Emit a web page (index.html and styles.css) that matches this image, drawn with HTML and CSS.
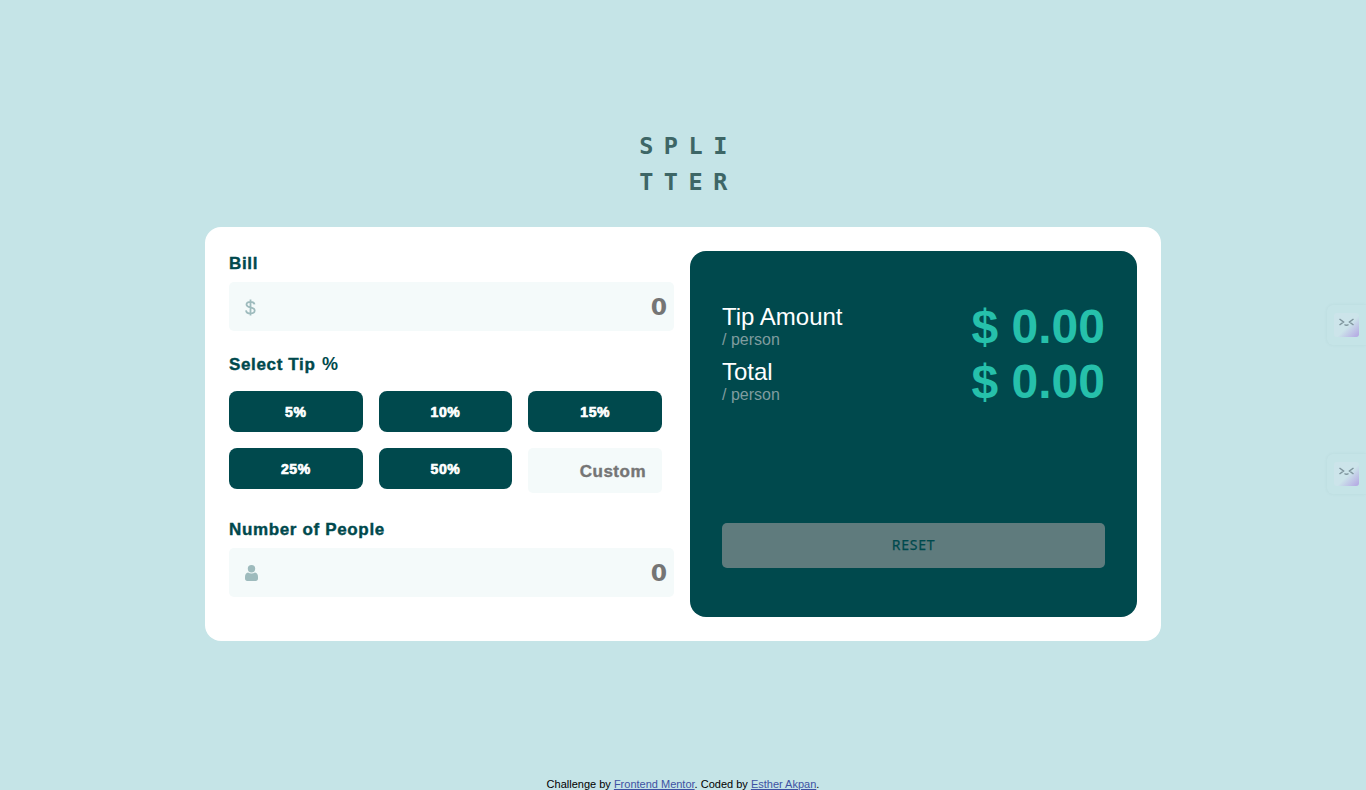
FILE: index.html
```html
<!DOCTYPE html>
<html lang="en">
<head>
<meta charset="utf-8">
<title>Tip calculator</title>
<link rel="stylesheet" href="styles.css">
</head>
<body>
<h1 class="logo"><span>SPLI</span><span>TTER</span></h1>
<main class="card">
  <form class="form">
    <label class="label bill" for="bill">Bill</label>
    <div class="field">
      <svg width="11" height="17" viewBox="0 0 11 17"><path fill="none" stroke="#9ebbbd" stroke-width="1.8" d="M9.5 5.3C9.2 3.6 7.8 2.8 5.5 2.8 3 2.8 1.5 3.8 1.5 5.5c0 4.2 8.2 1.6 8.2 6 0 1.900-1.700 2.900-4.200 2.900C2.700 14.400 1.200 13.200 1 11.300M5.500 .5v16"/></svg>
      <input class="entry" id="bill" placeholder="0">
    </div>
    <p class="label tip">Select Tip <span class="light">%</span></p>
    <div class="tips">
      <button type="button" class="pct">5%</button>
      <button type="button" class="pct">10%</button>
      <button type="button" class="pct">15%</button>
      <button type="button" class="pct">25%</button>
      <button type="button" class="pct">50%</button>
      <input class="custom" placeholder="Custom" aria-label="Custom tip">
    </div>
    <label class="label people" for="people">Number of People</label>
    <div class="field">
      <svg width="13" height="16" viewBox="0 0 13 16"><g fill="#9ebbbd"><circle cx="6.500" cy="3.700" r="3.700"/><path d="M3 7.500c2 1.400 5 1.400 7 0 2 .3 3 2 3 4.500v1.500c0 1.600-.8 2.500-2.300 2.500H2.300C.8 16 0 15.100 0 13.500V12c0-2.500 1-4.200 3-4.500z"/></g></svg>
      <input class="entry" id="people" placeholder="0">
    </div>
  </form>
  <section class="panel">
    <div class="result">
      <div><p class="name">Tip Amount</p><p class="per">/ person</p></div>
      <p class="amount">$ 0.00</p>
    </div>
    <div class="result">
      <div><p class="name">Total</p><p class="per">/ person</p></div>
      <p class="amount">$ 0.00</p>
    </div>
    <button type="button" class="reset">RESET</button>
  </section>
</main>
<footer class="credit">Challenge by <a href="#">Frontend Mentor</a>. Coded by <a href="#">Esther Akpan</a>.</footer>
<div class="widget upper"><svg class="face" viewBox="0 0 24 24"><path d="M5 6l4 3-4 3M19 6l-4 3 4 3M10 11.500q2 1.500 4 0"/></svg></div>
<div class="widget lower"><svg class="face" viewBox="0 0 24 24"><path d="M5 6l4 3-4 3M19 6l-4 3 4 3M10 11.500q2 1.500 4 0"/></svg></div>
</body>
</html>
```
FILE: styles.css
```css
* { box-sizing: border-box; }
body {
  margin: 0;
  height: 790px;
  overflow: hidden;
  display: flex;
  flex-direction: column;
  align-items: center;
  background: #c5e4e7;
  font-family: "Liberation Sans", Arial, sans-serif;
}
p { margin: 0; }
.logo {
  display: flex;
  flex-direction: column;
  flex-shrink: 0;
  margin: 128px 0 27px;
  padding-left: 11px;
  color: #3d6666;
  font: bold 23.5px/36px "DejaVu Sans Mono", monospace;
  letter-spacing: 10.5px;
}
.card {
  display: grid;
  grid-template-columns: 445px 447px;
  gap: 16px;
  flex-shrink: 0;
  width: 956px;
  height: 414px;
  padding: 24px;
  background: #fff;
  border-radius: 16px;
}
.label {
  display: block;
  height: 24px;
  color: #00494d;
  font-size: 17px;
  font-weight: bold;
  line-height: 25px;
  letter-spacing: .65px;
  -webkit-text-stroke: .4px #00494d;
}
.light { margin-left: 1px; font-size: 18px; -webkit-text-stroke: 0; }
.bill { margin-bottom: 7px; }
.tip { margin: 21px 0 15px; }
.people { margin: 24px 0 7px; }
.field {
  display: flex;
  align-items: center;
  height: 49px;
  padding: 1px 7px 0 16px;
  background: #f4fafa;
  border-radius: 5px;
}
.entry {
  flex: 1;
  min-width: 0;
  padding: 0;
  border: 0;
  background: none;
  text-align: right;
  font: bold 23.5px "DejaVu Sans", sans-serif;
}
input::placeholder { color: #757575; opacity: 1; }
.tips {
  display: grid;
  grid-template-columns: repeat(3, 1fr);
  gap: 16px;
  width: 433px;
  align-items: start;
}
.pct {
  height: 41px;
  padding: 0;
  border: 0;
  border-radius: 8px;
  background: #00494d;
  color: #fff;
  font: bold 14px "Liberation Sans", sans-serif;
  letter-spacing: .6px;
  -webkit-text-stroke: .7px #fff;
}
.custom {
  width: 100%;
  height: 45px;
  padding: 2px 16px 0;
  border: 0;
  border-radius: 5px;
  background: #f4fafa;
  text-align: right;
  font: bold 17px "Liberation Sans", sans-serif;
  letter-spacing: .5px;
  -webkit-text-stroke: .4px #757575;
}
.panel {
  display: flex;
  flex-direction: column;
  padding: 48px 32px 49px;
  border-radius: 16px;
  background: #00494d;
}
.result {
  display: flex;
  justify-content: space-between;
  height: 55px;
}
.name {
  padding-top: 4px;
  color: #fff;
  font-size: 24px;
  line-height: 27px;
}
.per {
  color: #7f9c9f;
  font-size: 16px;
  line-height: 20px;
}
.amount {
  color: #26c0ab;
  font-size: 48px;
  font-weight: bold;
  line-height: 55px;
}
.reset {
  height: 45px;
  margin-top: auto;
  padding: 0 0 2px;
  border: 0;
  border-radius: 5px;
  background: #5f7b7d;
  color: #00494d;
  font: 14px "Noto Sans", sans-serif;
  letter-spacing: .8px;
  -webkit-text-stroke: .25px #00494d;
}
.credit {
  margin-top: 137px;
  font-size: 11px;
  line-height: 13px;
}
.credit a { color: #3e52a3; }
.widget {
  position: absolute;
  right: 0;
  width: 39px;
  height: 40px;
  padding: 8px 7px;
  border-radius: 6px 0 0 6px;
  box-shadow: 0 0 3px rgba(100, 150, 160, .12);
}
.upper { top: 305px; }
.lower { top: 454px; }
.face {
  display: block;
  width: 25px;
  height: 24px;
  border-radius: 3px;
  background: linear-gradient(135deg, #cce4ea 55%, #b3a4e3);
  fill: none;
  stroke: #7f959d;
  stroke-width: 1.5;
}
```
